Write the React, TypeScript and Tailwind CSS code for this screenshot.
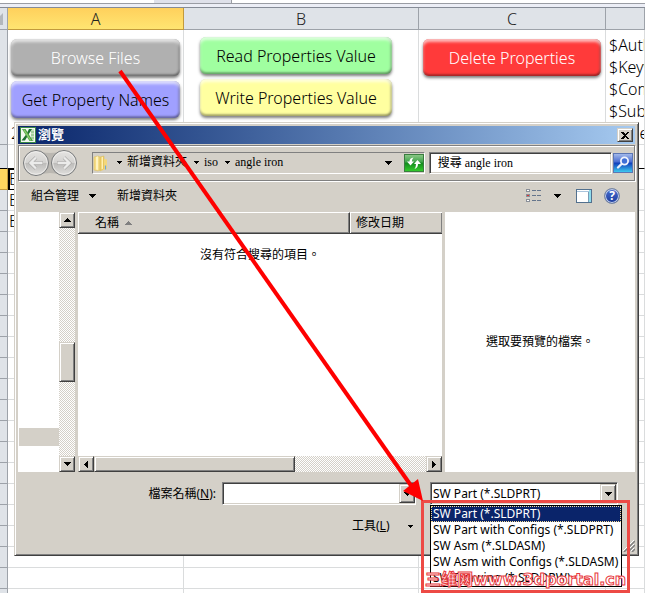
import { useState } from "react";
import type { ReactNode } from "react";
import clsx from "clsx";

const FACE = "bg-[#d4d0c8]";
const RAISED =
  "bg-[#d4d0c8] border border-t-[#d4d0c8] border-l-[#d4d0c8] border-r-[#404040] border-b-[#404040] shadow-[inset_1px_1px_0_#fff,inset_-1px_-1px_0_#808080]";
const SUNKEN =
  "bg-white border border-t-[#808080] border-l-[#808080] border-r-white border-b-white shadow-[inset_1px_1px_0_#404040,inset_-1px_-1px_0_#d4d0c8]";
const TRACK =
  "bg-[conic-gradient(#d4d0c8_25%,#fff_0_50%,#d4d0c8_0_75%,#fff_0)] bg-[length:2px_2px]";

const FILE_TYPES = [
  "SW Part (*.SLDPRT)",
  "SW Part with Configs (*.SLDPRT)",
  "SW Asm (*.SLDASM)",
  "SW Asm with Configs (*.SLDASM)",
  "SW Drawing (*.SLDDRW)",
];

const DIRECTIONS = {
  up: "M0 4h7L3.5 0z",
  down: "M0 0h7L3.5 4z",
  left: "M4 0v7L0 3.5z",
  right: "M0 0v7l4-3.5z",
};

function Triangle({ dir = "down", small, className }: { dir?: keyof typeof DIRECTIONS; small?: boolean; className?: string }) {
  const vertical = dir === "up" || dir === "down";
  const width = vertical ? 7 : 4;
  const height = vertical ? 4 : 7;
  return (
    <svg
      width={small ? 5 : width}
      height={small ? 3 : height}
      viewBox={`0 0 ${width} ${height}`}
      className={clsx("shrink-0", className)}
      fill="currentColor"
      shapeRendering="crispEdges"
      aria-hidden="true"
    >
      <path d={DIRECTIONS[dir]} />
    </svg>
  );
}

function MacroButton({ className, children }: { className: string; children: ReactNode }) {
  return (
    <button
      type="button"
      className={clsx(
        "block h-[37px] w-full rounded-md text-base font-light whitespace-nowrap shadow-[inset_0_3px_3px_rgba(255,255,255,.65),inset_0_-2px_2px_rgba(0,0,0,.3),inset_-2px_0_2px_rgba(0,0,0,.2),0_2px_3px_rgba(0,0,0,.5)]",
        className
      )}
    >
      {children}
    </button>
  );
}

function ScrollButton({ dir, label }: { dir: keyof typeof DIRECTIONS; label: string }) {
  return (
    <button
      type="button"
      aria-label={label}
      className={clsx("flex size-4 shrink-0 items-center justify-center", RAISED)}
    >
      <Triangle dir={dir} />
    </button>
  );
}

function Sheet() {
  const cell = "border-r border-b border-[#dadcdd] p-0 align-top";
  const head = "border-r border-b border-[#9da2a9] bg-[#dfe3e8] p-0 font-light";
  return (
    <table className="w-full table-fixed border-separate border-spacing-0 text-base font-light text-black">
      <colgroup>
        <col className="w-2" />
        <col className="w-[176px]" />
        <col className="w-[235px]" />
        <col className="w-[187px]" />
        <col />
      </colgroup>
      <thead>
        <tr className="h-[22px] text-base leading-5 text-[#222]">
          <th className={head}>
            <svg width="7" height="21" className="block" aria-hidden="true">
              <path d="M3 5v12H0V8z" fill="#b3b7bc" />
            </svg>
          </th>
          <th className="border-r border-b border-[#c29a3c] bg-linear-to-b from-[#ffd05c] to-[#ffe571] p-0 pt-px font-light">A</th>
          <th className={clsx(head, "pt-px")}>B</th>
          <th className={clsx(head, "pt-px")}>C</th>
          <th className={head} />
        </tr>
      </thead>
      <tbody>
        <tr className="h-[114px]">
          <td className={head} />
          <td className={cell}>
            <div className="flex flex-col gap-[5px] pt-[9px] pr-[3px] pl-[3px]">
              <MacroButton className="bg-[#b0b0b0] text-white">Browse Files</MacroButton>
              <MacroButton className="bg-[#a0a0ff]">Get Property Names</MacroButton>
              <span className="h-5 leading-5">2</span>
            </div>
          </td>
          <td className={cell}>
            <div className="flex flex-col gap-[5px] pt-[7px] pr-[26px] pl-4">
              <MacroButton className="bg-[#a0ffa0]">Read Properties Value</MacroButton>
              <MacroButton className="bg-[#ffffa0]">Write Properties Value</MacroButton>
            </div>
          </td>
          <td className={cell}>
            <div className="pt-[9px] pr-1 pl-1">
              <MacroButton className="bg-[#ff3a3a] text-white">Delete Properties</MacroButton>
            </div>
          </td>
          <td className={cell}>
            <div className="overflow-hidden pt-1 pl-[3px] leading-[22px] whitespace-nowrap">
              $Author
              <br />
              $Keywords
              <br />
              $Comments
              <br />
              $Subject
              <br />
              $Title
            </div>
          </td>
        </tr>
        <tr className="h-6">
          <td className={clsx(head, "border-b-black")} />
          {[1, 2, 3, 4].map((n) => (
            <td key={n} className={clsx(cell, "border-b-black")} />
          ))}
        </tr>
        {Array.from({ length: 22 }, (_, row) => (
          <tr key={row} className="h-[21px] leading-5">
            <td className={row === 0 ? "border-r border-b border-[#c29a3c] bg-[#ffd75f] p-0" : head} />
            <td className={clsx(cell, "pl-px", row === 0 && "border-b-black shadow-[inset_2px_1px_0_#000]")}>
              {row < 3 ? "E" : null}
            </td>
            <td className={cell} />
            <td className={cell} />
            <td className={cell} />
          </tr>
        ))}
      </tbody>
    </table>
  );
}

function ExcelIcon() {
  return (
    <svg width="16" height="16" viewBox="0 0 16 16" aria-hidden="true">
      <rect x=".5" y=".5" width="15" height="15" fill="#f3f9f0" stroke="#3c8a45" />
      <path d="M11 2h3v12h-3z" fill="#c9e5c0" />
      <path d="M11 5h3M11 8h3M11 11h3" stroke="#7db77a" />
      <path d="M12 2L8.500 7.500 5 13.500H1.500L6.500 7 9 2z" fill="#1d6f30" />
      <path d="M2 2h3.500L13 14H9.500z" fill="#4ba044" />
      <path d="M3 2.500h1.500L11.500 13.500H10z" fill="#8fcf6e" />
    </svg>
  );
}

function NavArrows() {
  return (
    <svg width="56" height="28" viewBox="0 0 56 28" aria-hidden="true">
      <defs>
        <linearGradient id="knob" x1="0" y1="0" x2="0" y2="1">
          <stop offset="0" stopColor="#e6e5e3" />
          <stop offset=".48" stopColor="#d3d2d0" />
          <stop offset=".52" stopColor="#bdbcba" />
          <stop offset="1" stopColor="#e2e1df" />
        </linearGradient>
      </defs>
      <path d="M14 1.500q14 5 28 0v25q-14-5-28 0z" fill="#bab7b1" />
      {[14, 42].map((cx) => (
        <g key={cx}>
          <circle cx={cx} cy="14" r="12.500" fill="url(#knob)" stroke="#77797b" />
          <circle cx={cx} cy="14" r="11.300" fill="none" stroke="#f1f0ee" strokeOpacity=".8" />
        </g>
      ))}
      <g fill="none" stroke="#a8a7a5" strokeWidth="3.600">
        <path d="M21 14H8.500M14 8.500L8.500 14l5.500 5.500" />
        <path d="M35 14h12.500M42 8.500l5.500 5.500-5.500 5.500" />
      </g>
      <g fill="none" stroke="#ebebea" strokeWidth="2.400">
        <path d="M20.500 14H9M14 8.500L8.500 14l5.500 5.500" />
        <path d="M35.500 14h12M42 8.500l5.500 5.500-5.500 5.500" />
      </g>
    </svg>
  );
}

function FolderIcon() {
  return (
    <svg width="16" height="17" viewBox="0 0 16 17" className="shrink-0" aria-hidden="true">
      <path d="M1 2l4-1 2 1v13l-2 1-4-1z" fill="#f5dc84" stroke="#dcc066" strokeWidth=".6" />
      <path d="M3 2l2-.7V15l-2-.5z" fill="#fff3c0" />
      <path d="M7 2l4-1v13l-4 2z" fill="#ecc95c" stroke="#dcc066" strokeWidth=".6" />
      <path d="M8.500 2.200L10 1.800v12l-1.500.6z" fill="#fff0b4" />
      <path d="M11 4l3 .5V14l-7 2 4-2z" fill="#f3d77c" />
      <path d="M12.500 10.500v4" stroke="#6fa4d9" strokeWidth="1.200" />
    </svg>
  );
}

function RefreshIcon() {
  return (
    <svg width="20" height="18" viewBox="0 0 20 18" className="block" aria-hidden="true">
      <defs>
        <linearGradient id="green" x1="0" y1="0" x2="0" y2="1">
          <stop offset="0" stopColor="#8fc98a" />
          <stop offset=".45" stopColor="#3da348" />
          <stop offset=".5" stopColor="#128a1d" />
          <stop offset="1" stopColor="#35cf2c" />
        </linearGradient>
      </defs>
      <rect x=".5" y=".5" width="19" height="17" fill="url(#green)" stroke="#3a7d3f" />
      <path d="M9.500 3.500Q5.500 4 5.500 7.500H3l3.500 4L10 7.500H7.800Q8 5.200 9.500 3.500z" fill="#fff" />
      <path d="M10.500 15q3.500-1 3.500-5h3l-3.500-4L10 10h2q0 3-1.500 5z" fill="#fff" />
    </svg>
  );
}

function MagnifierIcon() {
  return (
    <svg width="20" height="20" viewBox="0 0 20 20" className="block" aria-hidden="true">
      <defs>
        <linearGradient id="blue" x1="0" y1="0" x2="0" y2="1">
          <stop offset="0" stopColor="#a8bdec" />
          <stop offset=".45" stopColor="#476bd1" />
          <stop offset=".5" stopColor="#103dba" />
          <stop offset="1" stopColor="#3fd0f2" />
        </linearGradient>
      </defs>
      <rect x=".5" y=".5" width="19" height="19" fill="url(#blue)" stroke="#5c76b4" />
      <path d="M8.500 11L5 14.500" stroke="#e9eefc" strokeWidth="2.400" strokeLinecap="round" />
      <circle cx="11.500" cy="8" r="3.600" fill="#3f6fd6" stroke="#f1f4fd" strokeWidth="1.800" />
    </svg>
  );
}

function ViewIcon() {
  return (
    <svg width="16" height="13" viewBox="0 0 16 13" shapeRendering="crispEdges" aria-hidden="true">
      {[0, 5, 10].map((y) => (
        <g key={y}>
          <rect x="0" y={y} width="4" height="3" fill="#8a8f98" />
          <rect x="1" y={y + 1} width="2" height="1" fill={y === 5 ? "#d33" : "#fff"} />
          <path d={`M6 ${y + 1.5}h4M11 ${y + 1.5}h4`} stroke="#65758c" />
        </g>
      ))}
    </svg>
  );
}

function PreviewPaneIcon() {
  return (
    <svg width="16" height="14" viewBox="0 0 16 14" shapeRendering="crispEdges" aria-hidden="true">
      <rect x=".5" y=".5" width="15" height="13" fill="#fff" stroke="#52708e" />
      <path d="M1 2h14v1H1z" fill="#a9c4dc" />
      <path d="M13 1h2v12h-2z" fill="#8fdcec" />
      <path d="M12 3h1v10h-1z" fill="#7a9cb5" />
    </svg>
  );
}

function HelpIcon() {
  return (
    <span className="flex size-4 items-center justify-center rounded-full border border-[#7886a0] bg-linear-to-b from-[#4d6fd0] to-[#1a3b9e] text-xs leading-none font-bold text-white shadow-[inset_0_0_0_1px_#c6d2ec]">
      ?
    </span>
  );
}

function AddressBar() {
  const crumbs = ["新增資料夾", "iso", "angle iron"];
  return (
    <div className="flex h-9 items-center border border-[#808080] pl-[3px] shadow-[inset_1px_1px_0_#fff,1px_1px_0_#fff]">
      <button type="button" aria-label="Back and forward" className="shrink-0">
        <NavArrows />
      </button>
      <div className="ml-3.5 flex h-[22px] min-w-0 flex-[330] items-center border border-t-[#808080] border-l-[#808080] border-r-white border-b-white">
        <FolderIcon />
        {crumbs.map((crumb, i) => (
          <span
            key={crumb}
            className="flex shrink-0 items-center pb-0.5 font-['Liberation_Serif','Noto_Sans_CJK_TC',serif]"
          >
            <Triangle small className={clsx("mr-[5px]", i === 0 ? "ml-2" : "ml-[7px]")} />
            {crumb}
          </span>
        ))}
        <Triangle className="mr-3 ml-auto" />
        <button type="button" aria-label="Refresh" className="shrink-0">
          <RefreshIcon />
        </button>
      </div>
      <input
        type="text"
        aria-label="搜尋"
        placeholder="搜尋 angle iron"
        className={clsx(
          "mr-px ml-1 h-[22px] min-w-0 flex-[165] px-2 font-['Liberation_Serif','Noto_Sans_CJK_TC',serif] outline-none placeholder:text-black",
          SUNKEN
        )}
      />
      <button type="button" aria-label="搜尋" className="shrink-0 pr-px">
        <MagnifierIcon />
      </button>
    </div>
  );
}

function CommandBar() {
  return (
    <div className="flex h-[31px] items-center pr-[15px] pb-0.5 pl-[13px]">
      <button type="button" className="flex items-center gap-2.5">
        組合管理
        <Triangle />
      </button>
      <button type="button" className="ml-[21px]">
        新增資料夾
      </button>
      <button type="button" aria-label="View" className="ml-auto flex items-center gap-3">
        <ViewIcon />
        <Triangle />
      </button>
      <button type="button" aria-label="Preview pane" className="ml-[15px]">
        <PreviewPaneIcon />
      </button>
      <button type="button" aria-label="Help" className="ml-3">
        <HelpIcon />
      </button>
    </div>
  );
}

function Browser() {
  const th = "flex items-center border-t border-r border-b border-t-white border-r-[#404040] border-b-[#404040] shadow-[inset_1px_0_0_#fff,inset_-1px_-1px_0_#808080]";
  return (
    <div className="flex h-[260px] gap-[3px]">
      <div className="flex w-[57px] shrink-0 bg-white">
        <div className="flex flex-1 flex-col justify-end pb-[26px] pl-px">
          <div className={clsx("h-[18px]", FACE)} />
        </div>
        <div className={clsx("flex w-4 flex-col", TRACK)}>
          <ScrollButton dir="up" label="Scroll up" />
          <div className="flex-[114]" />
          <div className={clsx("h-10", RAISED)} />
          <div className="flex-[74]" />
          <ScrollButton dir="down" label="Scroll down" />
        </div>
      </div>

      <div className="flex min-w-0 flex-[364] flex-col bg-white">
        <div className={clsx("flex h-[22px]", FACE)}>
          <div className={clsx("flex-[254] gap-1.5 pl-[17px]", th)}>
            名稱
            <Triangle dir="up" className="text-[#808080]" />
          </div>
          <div className={clsx("flex-[86] border-r-0 pl-1.5", th)}>修改日期</div>
        </div>
        <p className="flex-1 pt-[11px] text-center leading-5">沒有符合搜尋的項目。</p>
        <div className={clsx("flex h-4", TRACK)}>
          <ScrollButton dir="left" label="Scroll left" />
          <div className={clsx("flex-[199]", RAISED)} />
          <div className="flex-[131]" />
          <ScrollButton dir="right" label="Scroll right" />
        </div>
      </div>

      <div className="flex min-w-0 flex-[190] items-center justify-center bg-white">
        選取要預覽的檔案。
      </div>
    </div>
  );
}

function FileTypeField() {
  const [fileType, setFileType] = useState(FILE_TYPES[0]);
  return (
    <div className="relative mr-[17px] ml-3.5 flex-[188]">
      <select
        aria-label="File type"
        value={fileType}
        onChange={(e) => setFileType(e.target.value)}
        className={clsx("block h-[23px] w-full appearance-none pl-0.5 text-xs outline-none", SUNKEN)}
      >
        {FILE_TYPES.map((type) => (
          <option key={type}>{type}</option>
        ))}
      </select>
      <span
        className={clsx("pointer-events-none absolute top-0.5 right-0.5 bottom-0.5 flex w-4 items-center justify-center", RAISED)}
      >
        <Triangle />
      </span>
      <ul
        role="listbox"
        className="absolute top-full left-0 z-10 w-48 border border-black bg-white text-xs leading-4 whitespace-nowrap"
      >
        {FILE_TYPES.map((type) => (
          <li
            key={type}
            role="option"
            aria-selected={type === fileType}
            onClick={() => setFileType(type)}
            className={clsx(
              "h-4 px-0.5",
              type === fileType && "bg-[#0a246a] text-white outline-1 -outline-offset-1 outline-dotted outline-[#f5db95]"
            )}
          >
            {type}
          </li>
        ))}
      </ul>
      {/* highlight frame around the open list */}
      <div className="pointer-events-none absolute top-[18px] -right-3 -left-[9px] z-20 h-[93px] border-3 border-[#ed4a45]" />
      <div className="pointer-events-none absolute top-[86px] -left-[5px] z-20 font-['DejaVu_Sans','Noto_Sans_CJK_SC',sans-serif] text-base leading-6 font-bold whitespace-nowrap text-white [-webkit-text-stroke:1px_#e8383d]">
        三维网www.3dportal.cn
      </div>
    </div>
  );
}

function BrowseDialog() {
  return (
    <div
      role="dialog"
      aria-labelledby="dialog-title"
      className={clsx("absolute top-[122px] right-[6px] left-[14px] p-[3px] font-['Noto_Sans','Noto_Sans_CJK_TC',sans-serif] text-xs text-black", RAISED)}
    >
      <div className="mb-px flex h-[18px] items-center bg-linear-to-r from-[#0a246a] to-[#a6caf0] px-0.5 text-white">
        <ExcelIcon />
        <h1 id="dialog-title" className="ml-0.5 text-[13px] font-bold">
          瀏覽
        </h1>
        <button
          type="button"
          aria-label="Close"
          className={clsx("ml-auto flex h-3.5 w-4 items-center justify-center text-black", RAISED)}
        >
          <svg width="8" height="7" viewBox="0 0 8 7" shapeRendering="crispEdges" aria-hidden="true">
            <path d="M0 0h2l2 2 2-2h2L5 3.500 8 7H6L4 5 2 7H0l3-3.500z" />
          </svg>
        </button>
      </div>
      <AddressBar />
      <CommandBar />
      <Browser />
      <div className="flex pt-[10px]">
        <div className="flex w-[204px] shrink-0 justify-end pr-[6px]">
          <label htmlFor="file-name" className="leading-[23px]">
            檔案名稱(<u>N</u>):
          </label>
        </div>
        <div className="relative flex-[194]">
          <input id="file-name" type="text" className={clsx("block h-[23px] w-full px-1 outline-none", SUNKEN)} />
          <button
            type="button"
            aria-label="Recent files"
            className={clsx("absolute top-0.5 right-px bottom-0.5 flex w-4 items-center justify-center", RAISED)}
          >
            <Triangle />
          </button>
        </div>
        <FileTypeField />
      </div>
      <div className="flex h-[47px] items-start pt-[11px]">
        <button type="button" className="ml-[334px] flex items-center gap-[18px] leading-5">
          <span>
            工具(<u>L</u>)
          </span>
          <Triangle small />
        </button>
        <svg width="12" height="12" className="mt-auto ml-auto" stroke="#808080" strokeWidth="1.500" aria-hidden="true">
          <path d="M1 12L12 1M5 12l7-7M9 12l3-3" />
          <path d="M0 11L11 0M4 11l7-7M8 11l3-3" stroke="#fff" strokeWidth="1" />
        </svg>
      </div>
    </div>
  );
}

export default function App() {
  return (
    <main className="relative h-screen overflow-hidden bg-white font-['Noto_Sans','Noto_Sans_CJK_TC',sans-serif]">
      <div className="flex h-1 border-b border-[#9a9da4]">
        <div className="w-[154px]" />
        <div className="w-[78px] border-r border-[#9a9da4] bg-[#dfe1ea]" />
      </div>
      <div className="h-1 border-b border-[#858b96] bg-[#eceef6]" />
      <Sheet />
      <BrowseDialog />
      <svg
        viewBox="0 0 645 593"
        preserveAspectRatio="none"
        className="pointer-events-none absolute inset-0 z-30 size-full"
        fill="#fe0000"
        aria-hidden="true"
      >
        <path d="M120 71L412 487" stroke="#fe0000" strokeWidth="4" />
        <path d="M423 501L403 491l15-12z" />
      </svg>
    </main>
  );
}
